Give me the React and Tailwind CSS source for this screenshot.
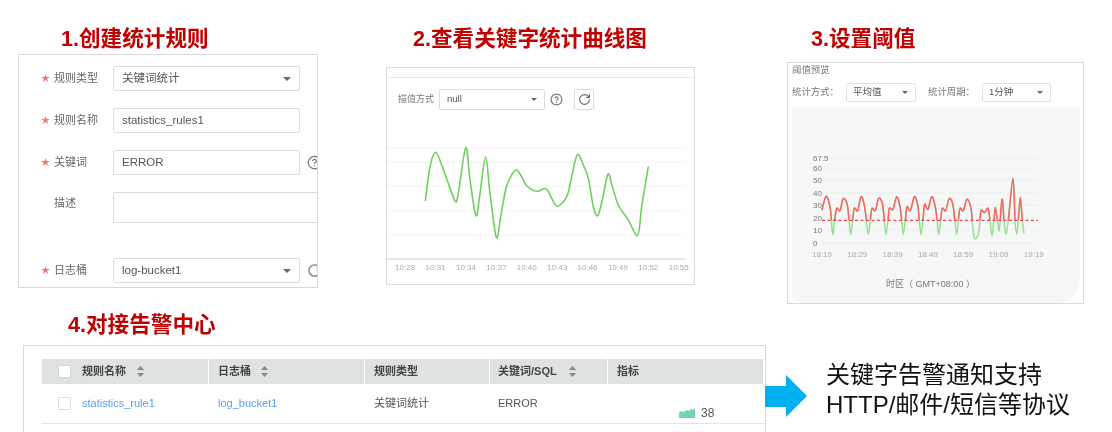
import React from "react";
import { CircleHelp, RotateCw } from "lucide-react";

// catmull-rom through the points, gives the soft curves of the charts
function smoothPath(points) {
    let d = `M${points[0][0]} ${points[0][1]}`;
    for (let i = 0; i < points.length - 1; i++) {
        const p0 = points[i - 1] || points[i];
        const p1 = points[i];
        const p2 = points[i + 1];
        const p3 = points[i + 2] || p2;
        const c1x = p1[0] + (p2[0] - p0[0]) / 6;
        const c1y = p1[1] + (p2[1] - p0[1]) / 6;
        const c2x = p2[0] - (p3[0] - p1[0]) / 6;
        const c2y = p2[1] - (p3[1] - p1[1]) / 6;
        d += ` C${c1x.toFixed(1)} ${c1y.toFixed(1)} ${c2x.toFixed(1)} ${c2y.toFixed(1)} ${p2[0].toFixed(1)} ${p2[1].toFixed(1)}`;
    }
    return d;
}

const keywordCurve = [
    [166, 543], [180, 440], [197, 397], [215, 435], [235, 490], [256, 544], [265, 520], [287, 383],
    [300, 480], [318, 587], [330, 520], [347, 411], [360, 520], [379, 652], [392, 590], [408, 505],
    [425, 465], [440, 449], [455, 470], [470, 497], [500, 514], [528, 506], [545, 535], [562, 559],
    [590, 530], [605, 470], [622, 404], [640, 435], [655, 475], [670, 560], [683, 587], [697, 540],
    [714, 462], [727, 500], [745, 555], [775, 600], [803, 646], [815, 560], [835, 440],
].map(([x, y]) => [x / 3 - 17, y / 3 - 90]);

const thresholdCurve = [
    [96, 210], [107, 170], [115, 180], [122, 215], [128, 283], [134, 240], [140, 205], [150, 212],
    [160, 175], [172, 195], [177, 240], [182, 283], [188, 240], [193, 205], [203, 212], [213, 170],
    [223, 195], [229, 240], [235, 283], [241, 240], [246, 205], [256, 212], [266, 175], [277, 190],
    [283, 240], [288, 283], [294, 240], [298, 205], [309, 208], [320, 170], [330, 200], [335, 240],
    [340, 283], [346, 240], [351, 200], [361, 212], [373, 170], [383, 195], [388, 240], [393, 283],
    [399, 240], [404, 193], [414, 208], [425, 170], [436, 200], [441, 240], [446, 283], [452, 240],
    [457, 205], [467, 212], [478, 175], [489, 195], [494, 240], [500, 283], [505, 240], [510, 205],
    [520, 212], [531, 178], [543, 205], [548, 260], [553, 294], [562, 290], [568, 265], [573, 212],
    [583, 218], [594, 205], [600, 240], [606, 287], [612, 240], [616, 202], [622, 240], [628, 270],
    [636, 178], [642, 240], [648, 283], [655, 240], [669, 115], [675, 240], [680, 283], [685, 240],
    [691, 172], [697, 240], [702, 280],
].map(([x, y]) => [x / 3 - 2, y / 3 + 33]);

function Caret({ size = 8 }) {
    return (
        <svg width={size} height={size / 2} viewBox="0 0 8 4" className="shrink-0">
            <path d="M0 0H8L4 4Z" fill="#666" />
        </svg>
    );
}

function SortIcon() {
    return (
        <svg width="7" height="11" viewBox="0 0 7 11" className="shrink-0">
            <path d="M3.5 0L7 4H0Z M3.5 11L0 7H7Z" fill="#888" />
        </svg>
    );
}

function Title({ children, className }) {
    return (
        <div className={`h-[28px] text-[21.6px] leading-[28px] font-bold text-[#c00000] whitespace-nowrap ${className}`}>
            {children}
        </div>
    );
}

function FormRow({ label, required = true, children, className = "" }) {
    return (
        <div className={`flex items-center ${className}`}>
            <span className="w-[13px] ml-[22px] shrink-0 text-[9px] text-[#f27a7a]">{required ? "★" : ""}</span>
            <span className="w-[59px] shrink-0 text-[11px] text-[#666]">{label}</span>
            {children}
        </div>
    );
}

function Field({ text, caret }) {
    return (
        <div className="flex items-center justify-between w-[187px] h-[25px] px-[8px] border border-[#dcdcdc] rounded-[2px] text-[11.5px] text-[#555] shrink-0">
            <span>{text}</span>
            {caret && <Caret />}
        </div>
    );
}

function SmallSelect({ text, className }) {
    return (
        <div className={`flex items-center justify-between h-[19px] pl-[6px] pr-[7px] border border-[#e2e2e2] rounded-[2px] text-[9.5px] text-[#555] shrink-0 ${className}`}>
            <span>{text}</span>
            <Caret size={6} />
        </div>
    );
}

function HeadCell({ text, sort, gap = "ml-[11px]", className = "pl-[9px]" }) {
    return (
        <div className={`flex items-center h-[25px] bg-[#dfe2e3] border-r border-white text-[11px] font-semibold text-[#444] ${className}`}>
            <span>{text}</span>
            {sort && <span className={gap}><SortIcon /></span>}
        </div>
    );
}

export default function App() {
    const times = ["10:28", "10:31", "10:34", "10:37", "10:40", "10:43", "10:46", "10:49", "10:52", "10:55"];
    const yTicks = [[51, "67.5"], [61, "60"], [73, "50"], [86, "40"], [98, "30"], [111, "20"], [123, "10"], [136, "0"]];
    const xTicks = ["18:19", "18:29", "18:39", "18:49", "18:59", "19:09", "19:19"];
    const thresholdPath = smoothPath(thresholdCurve);

    return (
        <div
            className="w-[1112px] h-[432px] overflow-hidden bg-white blur-[0.3px]"
            style={{ fontFamily: '"Liberation Sans", "Noto Sans CJK SC", sans-serif' }}
        >
            {/* top row, the three screenshots */}
            <div className="flex items-start h-[311px] pt-[25px]">
                <div className="ml-[18px] w-[300px] shrink-0">
                    <Title className="ml-[43px]">1.创建统计规则</Title>
                    <div className="mt-[1px] h-[234px] border border-[#d9d9d9] overflow-hidden pt-[11px]">
                        <FormRow label="规则类型" className="mb-[17px]">
                            <Field text="关键词统计" caret />
                        </FormRow>
                        <FormRow label="规则名称" className="mb-[17px]">
                            <Field text="statistics_rules1" />
                        </FormRow>
                        <FormRow label="关键词" className="mb-[17px]">
                            <Field text="ERROR" />
                            <CircleHelp size={15} strokeWidth={2} className="ml-[7px] shrink-0 text-[#777]" />
                        </FormRow>
                        <div className="flex items-start mb-[35px]">
                            <span className="ml-[35px] w-[59px] shrink-0 mt-[3px] text-[11px] text-[#666]">描述</span>
                            <div className="w-[300px] h-[31px] border border-[#dcdcdc] rounded-[2px] shrink-0" />
                        </div>
                        <FormRow label="日志桶">
                            <Field text="log-bucket1" caret />
                            <RotateCw size={15} strokeWidth={2} className="ml-[7px] shrink-0 text-[#777]" />
                        </FormRow>
                    </div>
                </div>

                <div className="ml-[68px] w-[309px] shrink-0">
                    <Title className="ml-[27px]">2.查看关键字统计曲线图</Title>
                    <div className="mt-[14px] h-[218px] border border-[#d9d9d9]">
                        <div className="h-[10px] border-b border-[#e8e8e8]" />
                        <div className="flex items-center mt-[11px] h-[21px] pl-[11px]">
                            <span className="w-[41px] shrink-0 text-[9px] text-[#777]">描值方式</span>
                            <div className="flex items-center justify-between w-[106px] h-[21px] pl-[7px] pr-[7px] border border-[#dcdcdc] rounded-[2px] text-[9.5px] text-[#555]">
                                <span>null</span>
                                <Caret size={6} />
                            </div>
                            <CircleHelp size={13} strokeWidth={2.2} className="ml-[5px] text-[#777]" />
                            <div className="flex items-center justify-center w-[20px] h-[21px] ml-[11px] border border-[#dcdcdc] rounded-[2px]">
                                <RotateCw size={13} strokeWidth={2} className="text-[#666]" />
                            </div>
                        </div>
                        <svg width="307" height="152" viewBox="0 0 307 152" className="block">
                            {[38, 52, 76, 101, 125].map((y) => (
                                <line key={y} x1="0" x2="298" y1={y} y2={y} stroke="#f4f4f4" />
                            ))}
                            <line x1="0" x2="298" y1="149" y2="149" stroke="#dcdcdc" strokeWidth="1.5" />
                            <path d={smoothPath(keywordCurve)} fill="none" stroke="#6fd05f" strokeWidth="1.6" />
                        </svg>
                        <div className="flex pl-[3px] h-[12px]">
                            {times.map((time) => (
                                <span key={time} className="w-[30.4px] shrink-0 text-center text-[8px] leading-[12px] text-[#aaa]">
                                    {time}
                                </span>
                            ))}
                        </div>
                    </div>
                </div>

                <div className="ml-[92px] w-[297px] shrink-0">
                    <Title className="ml-[24px]">3.设置阈值</Title>
                    <div className="mt-[9px] h-[242px] border border-[#d9d9d9]">
                        <div className="h-[14px] pl-[4px] text-[9.4px] leading-[14px] text-[#777]">阈值预览</div>
                        <div className="flex items-center mt-[6px] h-[19px] pl-[4px]">
                            <span className="w-[54px] shrink-0 text-[9.4px] text-[#777]">统计方式：</span>
                            <SmallSelect text="平均值" className="w-[70px]" />
                            <span className="w-[54px] shrink-0 ml-[12px] text-[9.4px] text-[#777]">统计周期：</span>
                            <SmallSelect text="1分钟" className="w-[69px]" />
                        </div>
                        <div className="ml-[4px] mt-[5px] w-[288px] h-[196px] bg-[#f6f7f7] rounded-bl-[10px] rounded-br-[24px]">
                            <svg width="288" height="160" viewBox="0 0 288 160" className="block">
                                <defs>
                                    <clipPath id="overThreshold">
                                        <rect x="0" y="0" width="288" height="113.3" />
                                    </clipPath>
                                </defs>
                                {yTicks.map(([y, label]) => (
                                    <g key={label}>
                                        <line x1="30" x2="246" y1={y} y2={y} stroke="#eeeeee" />
                                        <text x="21" y={y + 3} fontSize="8" fill="#777">{label}</text>
                                    </g>
                                ))}
                                {xTicks.map((label, i) => (
                                    <text key={label} x={30 + i * 35.3} y="150" fontSize="8" fill="#aaa" textAnchor="middle">
                                        {label}
                                    </text>
                                ))}
                                <path d={thresholdPath} fill="none" stroke="#8fe088" strokeWidth="1.4" />
                                <path d={thresholdPath} fill="none" stroke="#fa6464" strokeWidth="1.5" clipPath="url(#overThreshold)" />
                                <line x1="30" x2="246" y1="113.3" y2="113.3" stroke="#f4424a" strokeWidth="1.2" strokeDasharray="3 2.5" />
                            </svg>
                            <div className="mt-[11px] text-center text-[9px] text-[#777] pr-[11px]">时区（ GMT+08:00 ）</div>
                        </div>
                    </div>
                </div>
            </div>

            {/* bottom row, the alarm table and the note beside it */}
            <Title className="ml-[68px] mb-[6px]">4.对接告警中心</Title>
            <div className="flex items-start">
                <div className="ml-[23px] w-[743px] h-[120px] border border-[#d9d9d9] pl-[18px] pt-[13px] shrink-0">
                    <div className="grid grid-cols-[167px_156px_125px_118px_156px]">
                        <HeadCell text="规则名称" sort className="pl-[40px]" />
                        <HeadCell text="日志桶" sort gap="ml-[10px]" />
                        <HeadCell text="规则类型" />
                        <HeadCell text="关键词/SQL" sort gap="ml-[12px]" className="pl-[8px]" />
                        <HeadCell text="指标" />
                    </div>
                    <div className="relative -mt-[25px] h-[25px] w-0">
                        <div className="absolute left-[16px] top-[6px] w-[13px] h-[13px] bg-white border border-[#d5d5d5] rounded-[1px]" />
                    </div>
                    <div className="grid grid-cols-[167px_156px_125px_118px_156px] h-[40px] border-b border-[#e4e4e4] text-[11px] text-[#555]">
                        <div className="flex items-center pl-[16px]">
                            <span className="w-[13px] h-[13px] mr-[11px] border border-[#dcdcdc] rounded-[1px]" />
                            <span className="text-[#5c9df5]">statistics_rule1</span>
                        </div>
                        <div className="flex items-center pl-[9px] text-[#5c9df5]">log_bucket1</div>
                        <div className="flex items-center pl-[9px]">关键词统计</div>
                        <div className="flex items-center pl-[8px]">ERROR</div>
                        <div className="flex items-end pl-[71px] pb-[2px]">
                            <svg width="16" height="10" viewBox="0 0 16 10" className="mb-[3px] mr-[6px]">
                                <path d="M0 10V5L2 3L5 4L8 2L10 3L12 1L14 2L16 0V10Z" fill="#6fd6ae" />
                            </svg>
                            <span className="text-[12px] leading-[16px]">38</span>
                        </div>
                    </div>
                </div>

                <svg width="42" height="42" viewBox="0 0 42 42" className="mt-[30px] -ml-[1px] shrink-0">
                    <path d="M0 11H21V0L42 21L21 42V32H0Z" fill="#00b0f0" />
                </svg>

                <div className="ml-[19px] mt-[15px] text-[24px] leading-[29.5px] text-[#111] whitespace-nowrap">
                    关键字告警通知支持
                    <br />
                    HTTP/邮件/短信等协议
                </div>
            </div>
        </div>
    );
}
